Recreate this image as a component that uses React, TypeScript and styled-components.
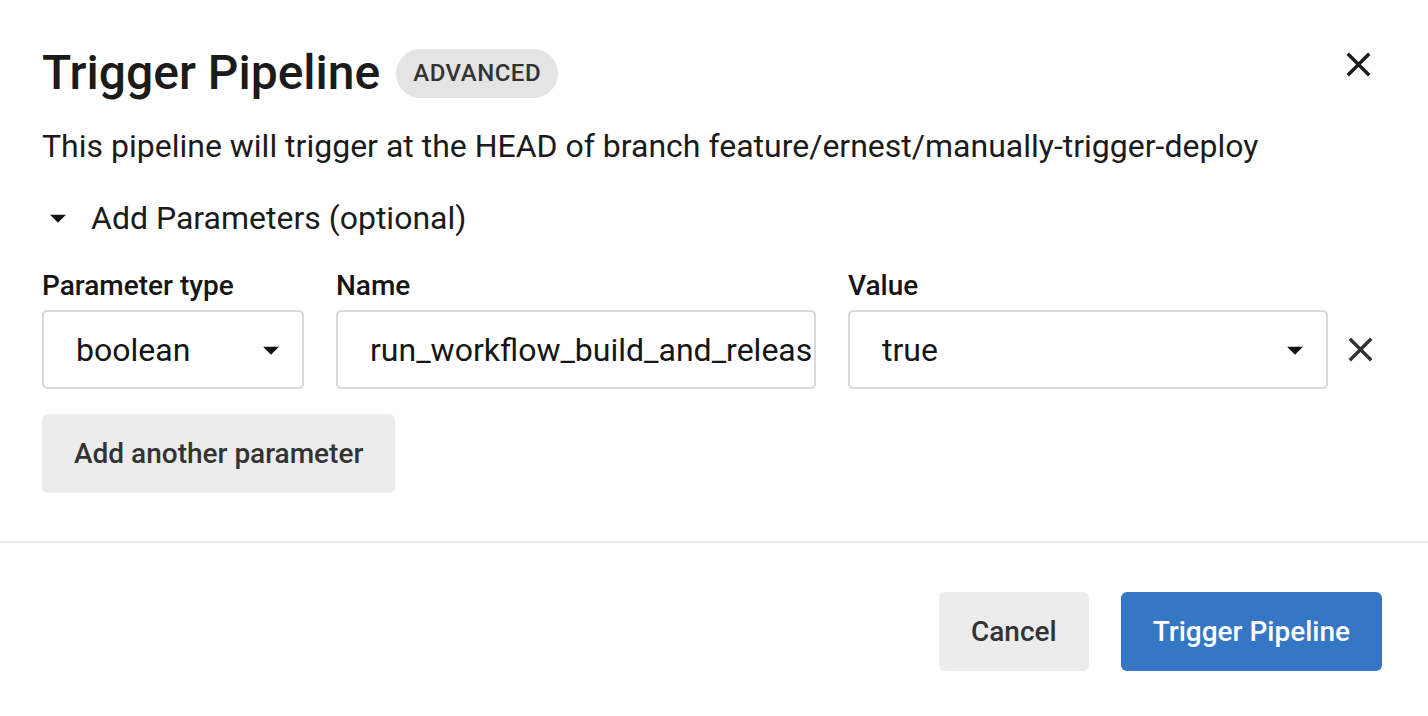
import React from "react";
import styled, { createGlobalStyle } from "styled-components";

const GlobalStyle = createGlobalStyle`
  html, body {
    margin: 0;
    padding: 0;
    background: #ffffff;
    font-family: Roboto, "Liberation Sans", Arial, sans-serif;
    -webkit-font-smoothing: antialiased;
  }
  * { box-sizing: border-box; }
`;

const Dialog = styled.div`
  width: 1428px;
  height: 716px;
  background: #fff;
  display: flex;
  flex-direction: column;
`;

const Body = styled.div`
  padding: 45px 46px 48px 42px;
  display: flex;
  flex-direction: column;
`;

const HeaderRow = styled.div`
  display: flex;
  align-items: flex-start;
  justify-content: space-between;
`;

const TitleGroup = styled.div`
  display: flex;
  align-items: center;
  gap: 16px;
`;

const Title = styled.h1`
  margin: 0;
  font-size: 48px;
  line-height: 56px;
  font-weight: 500;
  color: #1b1b1b;
`;

const Badge = styled.span`
  display: inline-flex;
  align-items: center;
  height: 49px;
  padding: 0 17px;
  border-radius: 25px;
  background: #e4e4e4;
  color: #333;
  font-size: 24px;
  font-weight: 500;
  letter-spacing: 0.5px;
`;

const IconButton = styled.button<{ $color?: string; $offset?: number }>`
  border: none;
  background: transparent;
  padding: 0;
  margin: ${(p) => p.$offset ?? 0}px 0 0 0;
  display: flex;
  align-items: center;
  justify-content: center;
  color: ${(p) => p.$color ?? "#1b1b1b"};
  cursor: pointer;
`;

const CloseButton = styled(IconButton)`
  margin-right: 3px;
`;

const Description = styled.p`
  margin: 25px 0 0 0;
  font-size: 32px;
  line-height: 40px;
  color: #1b1b1b;
`;

const Toggle = styled.div`
  margin-top: 32px;
  display: flex;
  align-items: center;
  gap: 14px;
  font-size: 32px;
  line-height: 40px;
  color: #1b1b1b;
  svg { margin-left: -3px; }
`;

const ParamRow = styled.div`
  margin-top: 32px;
  display: flex;
  align-items: flex-end;
  gap: 32px;
`;

const Field = styled.div<{ $width: number }>`
  width: ${(p) => p.$width}px;
  display: flex;
  flex-direction: column;
  gap: 8px;
`;

const Label = styled.label`
  font-size: 28px;
  line-height: 32px;
  font-weight: 500;
  color: #151515;
`;

const Box = styled.div`
  height: 79px;
  border: 2px solid #d9d9d9;
  border-radius: 5px;
  background: #fff;
  display: flex;
  align-items: center;
  justify-content: space-between;
  padding: 0 12px 0 32px;
  font-size: 32px;
  color: #151515;
`;

const TextInput = styled.input`
  height: 79px;
  width: 100%;
  border: 2px solid #d9d9d9;
  border-radius: 5px;
  background: #fff;
  padding: 0 2px 0 32px;
  font-family: inherit;
  font-size: 32px;
  color: #151515;
  outline: none;
`;

const RemoveButton = styled(IconButton)`
  height: 79px;
  margin-left: -20px;
`;

const SecondaryButton = styled.button`
  height: 79px;
  padding: 0 32px;
  border: none;
  border-radius: 6px;
  background: #ececec;
  color: #333;
  font-family: inherit;
  font-size: 28px;
  font-weight: 500;
  cursor: pointer;
`;

const AddButton = styled(SecondaryButton)`
  margin-top: 25px;
  align-self: flex-start;
`;

const PrimaryButton = styled(SecondaryButton)`
  background: #3677c5;
  color: #fff;
`;

const Divider = styled.hr`
  margin: 0;
  border: none;
  height: 2px;
  background: #ebebeb;
`;

const Footer = styled.div`
  display: flex;
  justify-content: flex-end;
  gap: 32px;
  padding: 49px 46px 45px 42px;
`;

const CloseIcon = ({ size }: { size: number }) => (
  <svg width={size} height={size} viewBox="0 0 24 24" fill="currentColor">
    <path d="M19 6.41L17.59 5 12 10.59 6.41 5 5 6.41 10.59 12 5 17.59 6.41 19 12 13.41 17.59 19 19 17.59 13.41 12z" />
  </svg>
);

const ArrowDrop = ({ size }: { size: number }) => (
  <svg width={size} height={size} viewBox="0 0 24 24" fill="#111">
    <path d="M7 10l5 5 5-5z" />
  </svg>
);

export default function App() {
  return (
    <>
      <GlobalStyle />
      <Dialog>
        <Body>
          <HeaderRow>
            <TitleGroup>
              <Title>Trigger Pipeline</Title>
              <Badge>ADVANCED</Badge>
            </TitleGroup>
            <CloseButton $offset={-1} aria-label="Close">
              <CloseIcon size={41} />
            </CloseButton>
          </HeaderRow>
          <Description>
            This pipeline will trigger at the HEAD of branch feature/ernest/manually-trigger-deploy
          </Description>
          <Toggle>
            <ArrowDrop size={38} />
            <span>Add Parameters (optional)</span>
          </Toggle>
          <ParamRow>
            <Field $width={262}>
              <Label>Parameter type</Label>
              <Box>
                <span>boolean</span>
                <ArrowDrop size={38} />
              </Box>
            </Field>
            <Field $width={480}>
              <Label>Name</Label>
              <TextInput readOnly value="run_workflow_build_and_release" />
            </Field>
            <Field $width={480}>
              <Label>Value</Label>
              <Box>
                <span>true</span>
                <ArrowDrop size={38} />
              </Box>
            </Field>
            <RemoveButton $color="#333" aria-label="Remove parameter">
              <CloseIcon size={41} />
            </RemoveButton>
          </ParamRow>
          <AddButton>Add another parameter</AddButton>
        </Body>
        <Divider />
        <Footer>
          <SecondaryButton>Cancel</SecondaryButton>
          <PrimaryButton>Trigger Pipeline</PrimaryButton>
        </Footer>
      </Dialog>
    </>
  );
}
